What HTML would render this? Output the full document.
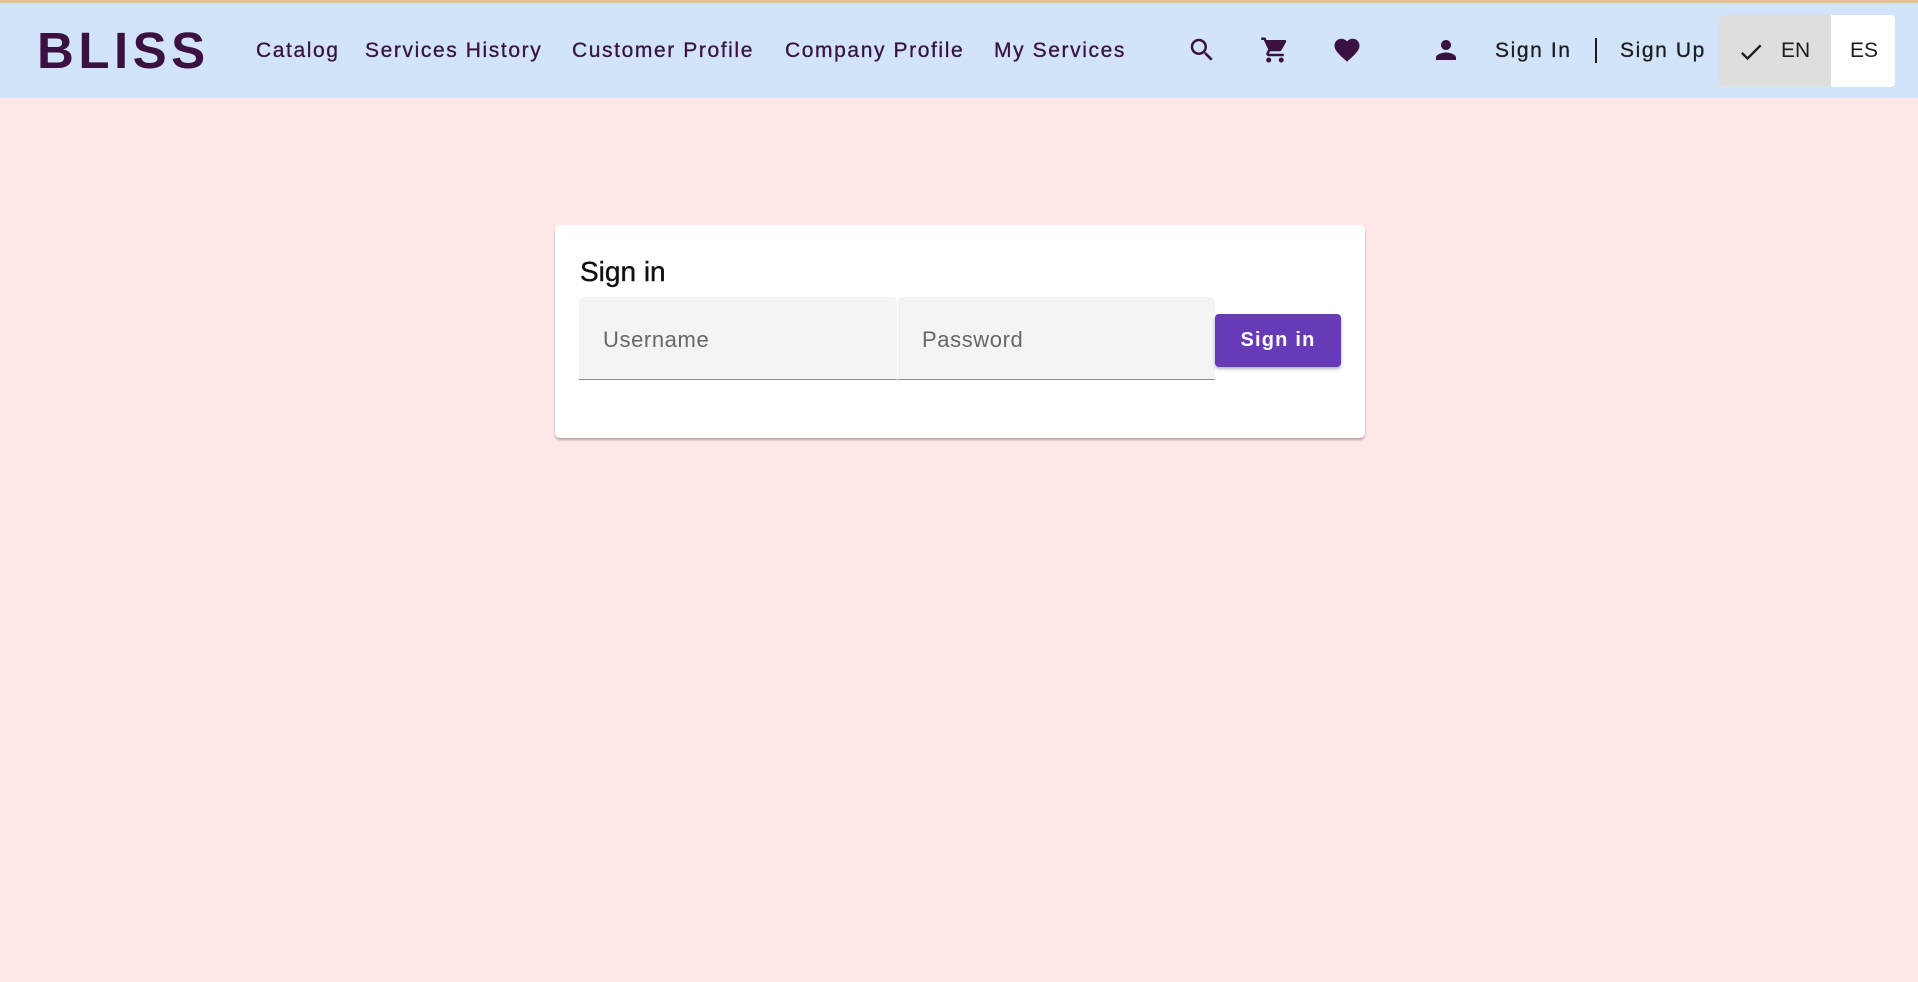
<!DOCTYPE html>
<html><head><meta charset="utf-8"><style>
*{margin:0;padding:0;box-sizing:border-box}
body{width:1918px;height:982px;background:#fee8e7;font-family:"Liberation Sans",sans-serif;position:relative;overflow:hidden}
.top{position:absolute;left:0;top:0;width:1918px;height:3px;background:#e3c08f}
.nav{position:absolute;left:0;top:3px;width:1918px;height:95px;background:#d1e4f9}
.abs{position:absolute}
.logo{left:37px;top:21px;font-size:51px;font-weight:bold;letter-spacing:4.5px;color:#3a1141;line-height:60px}
.link{top:38px;font-size:21px;letter-spacing:1.6px;color:#3a1141;line-height:25px;white-space:nowrap;-webkit-text-stroke:0.3px #3a1141}
.dark{color:#1d1b20;-webkit-text-stroke:0.3px #1d1b20}
.lang{left:1719px;top:15px;width:176px;height:72px;border-radius:4px;overflow:hidden;background:#fff}
.en{position:absolute;left:0;top:0;width:112px;height:72px;background:#dedede}
.card{left:555px;top:225px;width:810px;height:213px;background:#fff;border-radius:5px;box-shadow:0 2px 2px rgba(0,0,0,.3)}
.inp{top:297px;height:83px;background:#f4f4f4;border-bottom:1.5px solid #8a8a8a;font-size:22px;color:#666;padding:30px 0 0 24px;letter-spacing:.6px}
.btn{left:1215px;top:314px;width:126px;height:53px;background:#673ab7;border-radius:4px;color:#fff;font-weight:bold;font-size:20px;letter-spacing:1.2px;text-align:center;line-height:53px;box-shadow:0 2px 3px rgba(0,0,0,.3)}
</style></head><body>
<div class="top"></div>
<div class="nav"></div>
<div class="abs logo">BLISS</div>
<div class="abs link" style="left:256px">Catalog</div>
<div class="abs link" style="left:365px">Services History</div>
<div class="abs link" style="left:572px">Customer Profile</div>
<div class="abs link" style="left:785px">Company Profile</div>
<div class="abs link" style="left:994px">My Services</div>
<svg class="abs" style="left:1187px;top:35px" width="30" height="30" viewBox="0 0 24 24"><path fill="#3a1141" d="M15.5 14h-.79l-.28-.27A6.470 6.470 0 0 0 16 9.5 6.5 6.5 0 1 0 9.5 16c1.61 0 3.09-.59 4.23-1.57l.27.28v.79l5 4.99L20.49 19l-4.99-5zm-6 0C7.01 14 5 11.99 5 9.5S7.01 5 9.5 5 14 7.01 14 9.5 11.99 14 9.5 14z"/></svg>
<svg class="abs" style="left:1260px;top:35px" width="30" height="30" viewBox="0 0 24 24"><path fill="#3a1141" d="M7 18c-1.1 0-2 .9-2 2s.9 2 2 2 2-.9 2-2-.9-2-2-2zM1 2v2h2l3.6 7.59-1.35 2.45c-.16.28-.25.61-.25.96 0 1.1.9 2 2 2h12v-2H7.42c-.14 0-.25-.11-.25-.25l.03-.12.9-1.630h7.45c.75 0 1.41-.41 1.75-1.03l3.58-6.49A1 1 0 0 0 20 4H5.21l-.94-2H1zm16 16c-1.1 0-2 .9-2 2s.9 2 2 2 2-.9 2-2-.9-2-2-2z"/></svg>
<svg class="abs" style="left:1332px;top:35px" width="30" height="30" viewBox="0 0 24 24"><path fill="#3a1141" d="M12 21.35l-1.45-1.32C5.4 15.36 2 12.28 2 8.5 2 5.42 4.42 3 7.5 3c1.74 0 3.410.81 4.5 2.09C13.09 3.81 14.76 3 16.5 3 19.58 3 22 5.42 22 8.5c0 3.78-3.4 6.86-8.55 11.54L12 21.35z"/></svg>
<svg class="abs" style="left:1431px;top:35px" width="30" height="30" viewBox="0 0 24 24"><path fill="#3a1141" d="M12 12c2.21 0 4-1.79 4-4s-1.790-4-4-4-4 1.79-4 4 1.79 4 4 4zm0 2c-2.67 0-8 1.34-8 4v2h16v-2c0-2.66-5.33-4-8-4z"/></svg>
<div class="abs link dark" style="left:1495px">Sign In</div>
<div class="abs" style="left:1595px;top:38px;width:2px;height:25px;background:#1d1b20"></div>
<div class="abs link dark" style="left:1620px">Sign Up</div>
<div class="abs lang"><div class="en"></div>
<svg class="abs" style="left:18px;top:23px" width="28" height="28" viewBox="0 0 24 24"><path fill="#1d1b20" d="M9 16.17L4.83 12l-1.42 1.41L9 19 21 7l-1.41-1.41z"/></svg>
<div class="abs" style="left:62px;top:24px;font-size:21px;color:#1d1b20">EN</div>
<div class="abs" style="left:131px;top:24px;font-size:21px;color:#1d1b20">ES</div>
</div>
<div class="abs card"></div>
<div class="abs" style="left:580px;top:256px;font-size:28px;color:#111;-webkit-text-stroke:0.4px #111">Sign in</div>
<div class="abs inp" style="left:579px;width:318px;border-radius:5px 5px 0 0">Username</div>
<div class="abs inp" style="left:898px;width:317px;border-radius:5px 5px 0 0">Password</div>
<div class="abs btn">Sign in</div>
</body></html>
